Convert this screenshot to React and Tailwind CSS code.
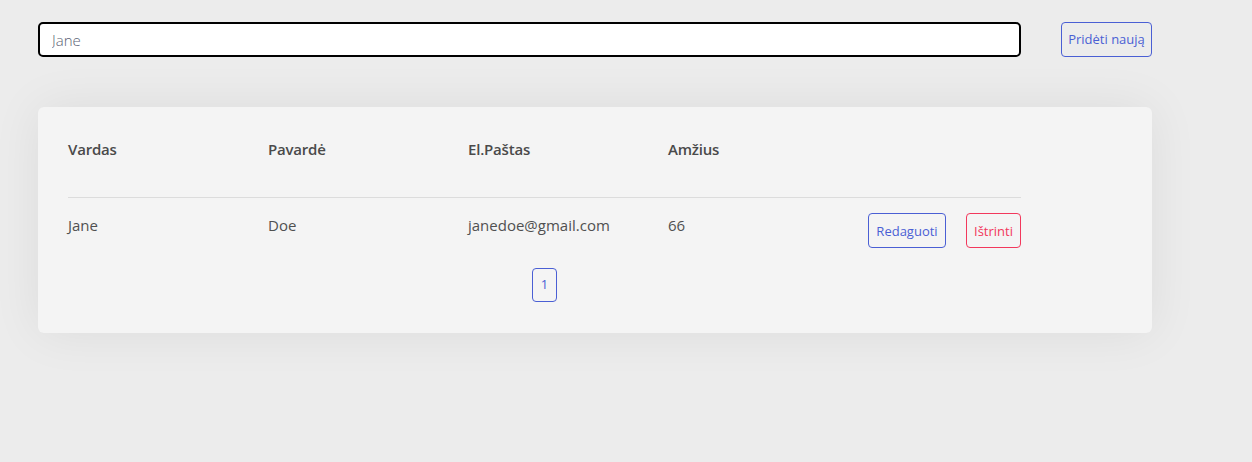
export default function App() {
  const font = { fontFamily: '"Segoe UI", "Open Sans", "Noto Sans", sans-serif' };
  return (
    <div className="min-h-[462px] w-[1252px] bg-[#ececec] text-[#555]" style={font}>
      <div className="flex items-center pl-[38px] pt-[22px]">
        <input
          defaultValue="Jane"
          className="h-[35px] w-[983px] rounded-[5px] border-2 border-black bg-white px-[12px] text-[15px] font-light text-[#5b5f74] outline-none"
        />
        <button className="ml-[40px] h-[35px] w-[91px] rounded-[4px] border border-[#4a5fd4] text-[13px] text-[#4a5fd4]">
          Pridėti naują
        </button>
      </div>
      <div className="ml-[38px] mt-[50px] w-[1114px] rounded-[6px] bg-[#f4f4f4] pl-[30px] pt-[32px] pb-[31px] shadow-[0_0_50px_rgba(0,0,0,0.07)]">
        <div className="w-[953px]">
          <div className="flex border-b border-[#dcdcdc] pb-[38px] text-[15px] font-[600] leading-[20px] tracking-[-0.2px] text-[#4a4a4a]">
            <div className="w-[200px]">Vardas</div>
            <div className="w-[200px]">Pavardė</div>
            <div className="w-[200px]">El.Paštas</div>
            <div className="w-[200px]">Amžius</div>
          </div>
          <div className="flex items-start pt-[14px] text-[15px] leading-[26px] text-[#505050]">
            <div className="w-[200px]">Jane</div>
            <div className="w-[200px]">Doe</div>
            <div className="w-[200px]">janedoe@gmail.com</div>
            <div className="w-[200px]">66</div>
            <div className="flex flex-1 gap-[20px] pt-[1px]">
              <button className="h-[35px] w-[78px] rounded-[4px] border border-[#4a5fd4] text-[13px] text-[#4a5fd4]">
                Redaguoti
              </button>
              <button className="h-[35px] w-[55px] rounded-[4px] border border-[#f2385c] text-[13px] text-[#f2385c]">
                Ištrinti
              </button>
            </div>
          </div>
          <div className="mt-[20px] flex justify-center">
            <button className="h-[34px] w-[25px] rounded-[4px] border border-[#4a5fd4] text-[13px] text-[#4a5fd4]">
              1
            </button>
          </div>
        </div>
      </div>
    </div>
  );
}
